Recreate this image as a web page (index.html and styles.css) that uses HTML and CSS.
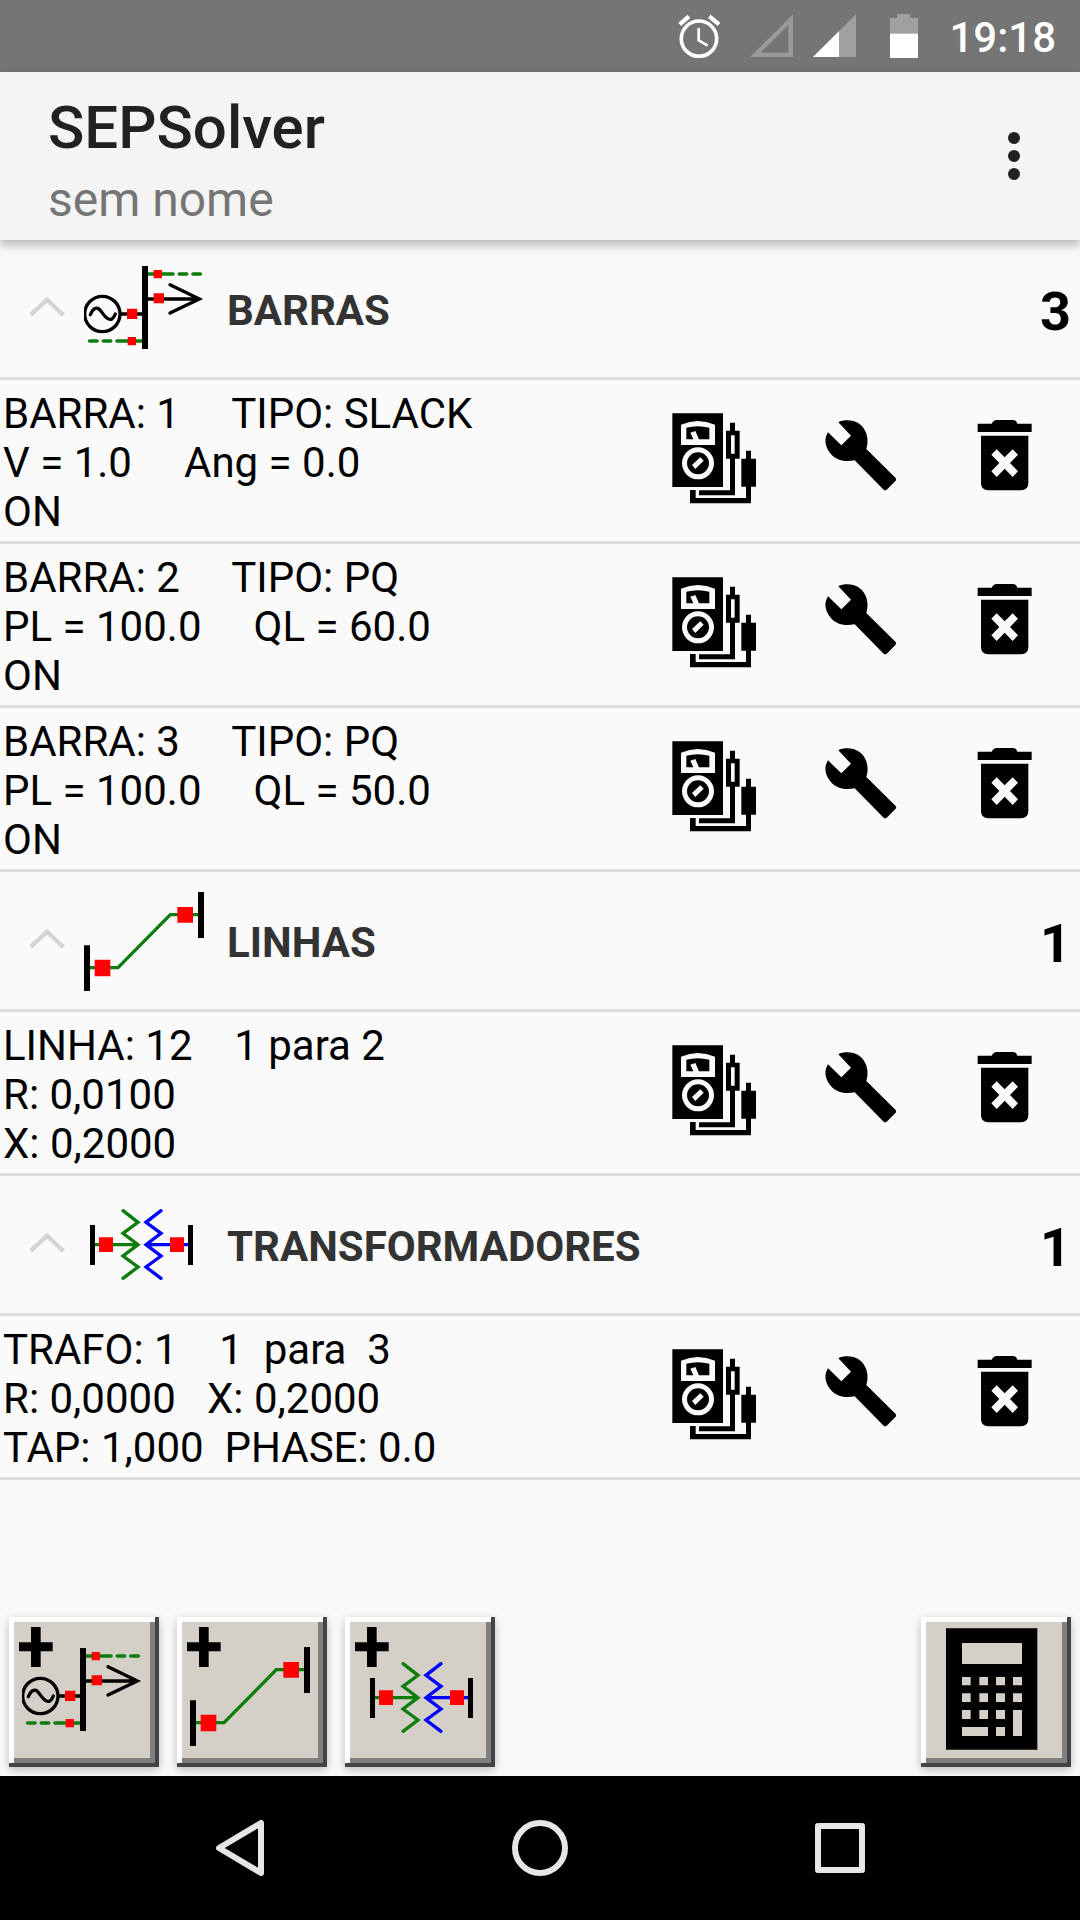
FILE: index.html
```html
<!DOCTYPE html>
<html lang="pt-BR">
<head>
<meta charset="utf-8">
<meta name="viewport" content="width=device-width, initial-scale=1">
<title>SEPSolver</title>
<link rel="stylesheet" href="styles.css">
</head>
<body>
<svg class="sprite" aria-hidden="true">
  <symbol id="chevron" viewBox="87 703 108 72">
    <path d="M92 763L141 717L190 763" fill="none" stroke="#d4d4d4" stroke-width="13"/>
  </symbol>
  <symbol id="bus" viewBox="252 597 360 300">
    <g fill="none" stroke="#000" stroke-width="10" stroke-linecap="round">
      <circle cx="307" cy="762" r="53"/>
      <path d="M271 764C280 742 293 738 304 755C318 775 334 792 346 762M362 762H430M440 717H598M510 674L598 717L510 759"/>
    </g>
    <path d="M445 642H519M538 642H560M579 642H601M269 843H291M310 843H332M351 843H428" fill="none" stroke="#0c7c0c" stroke-width="11" stroke-linecap="round"/>
    <path d="M426 618h18v249h-18z"/>
    <path d="M461 630h25v25h-25zM461 700h31v30h-31zM381 746h31v31h-31zM383 831h25v25h-25z" fill="#f00"/>
  </symbol>
  <symbol id="line" viewBox="252 92 360 300">
    <path d="M268 322H354L511 163H596" fill="none" stroke="#0c7c0c" stroke-width="10"/>
    <path d="M252 255h18v138h-18zM594 95h18v138h-18z"/>
    <path d="M284 298h47v50h-47zM532 140h47v47h-47z" fill="#f00"/>
  </symbol>
  <symbol id="transformer" viewBox="102 144 360 300">
    <path d="M132 293H264M219 191L264 226L219 259L264 293L219 327L264 360L219 394" fill="none" stroke="#0c7c0c" stroke-width="10" stroke-linecap="round"/>
    <path d="M416 293H288M333 191L288 226L333 259L288 293L333 327L288 360L333 394" fill="none" stroke="#00f" stroke-width="10" stroke-linecap="round"/>
    <path d="M120 234h15v120h-15zM414 234h15v120h-15z"/>
    <path d="M147 271h42v44h-42zM360 271h42v44h-42z" fill="#f00"/>
  </symbol>
  <symbol id="plus" viewBox="57 81 102 120">
    <path d="M93 81h29v46h36v27h-36v47h-29v-47h-36v-27h36z"/>
  </symbol>
  <symbol id="meter" viewBox="81 98 288 288">
    <path fill-rule="evenodd" d="M97 99H249V320H97zM123 133Q174 111 225 133V194H123zM126 249a48 48 0 1 0 96 0a48 48 0 1 0-96 0z"/>
    <path d="M139 142Q174 133 208 142V177H177L166 152L151 157L160 177H139z"/>
    <path fill-rule="evenodd" d="M141 249a33 33 0 1 0 66 0a33 33 0 1 0-66 0zM156 254L181 231L191 241L166 266z"/>
    <path fill-rule="evenodd" d="M270 127h15v24h14v84h-14v110H177v-15h93v-95h-12v-84h12zM273 165v55h11v-55zM318 211h15v24h15v84h-15v50H150v-40h17v24H318v-34h-14v-84h14z"/>
  </symbol>
  <symbol id="wrench" viewBox="517 98 288 288">
    <path d="M596 126C608 119 628 119 641 122C675 131 692 169 680 206L768 293Q771 297 768 301L741 328Q737 331 732 328L645 240C616 246 587 241 569 215C554 194 554 173 565 156L605 195L634 166z"/>
  </symbol>
  <symbol id="trash" viewBox="952 98 288 288">
    <path d="M1014 130H1056Q1062 119 1070 119H1120Q1130 119 1133 130H1176V155H1014z"/>
    <path fill-rule="evenodd" d="M1024 166H1166V308Q1166 330 1144 330H1046Q1024 330 1024 308zM1071 207L1055 223L1079 248L1055 273L1071 290L1095 265L1119 290L1135 273L1111 248L1135 223L1119 207L1095 231z"/>
  </symbol>
</svg>

<header class="status-bar">
  <svg class="status-alarm" viewBox="115 42 129 132" role="img" aria-label="Alarme">
    <g fill="none" stroke="#fff">
      <circle cx="178" cy="116" r="53" stroke-width="11"/>
      <path d="M177 84V121L204 137" stroke-width="8"/>
      <path d="M120 73L148 49M209 49L238 73" stroke-width="13"/>
    </g>
  </svg>
  <svg class="status-sim" viewBox="331 42 129 132" role="img" aria-label="Sem sinal">
    <path fill="#999" fill-rule="evenodd" d="M331 171L460 43V171zM363 158H446V75z"/>
  </svg>
  <svg class="status-signal" viewBox="519 42 129 132" role="img" aria-label="Sinal">
    <path fill="#a0a0a0" d="M519 171L648 43V171z"/>
    <path fill="#fff" d="M519 171L597 94V171z"/>
  </svg>
  <svg class="status-battery" viewBox="750 42 84 132" role="img" aria-label="Bateria">
    <path fill="#a0a0a0" d="M772 42h39v12h23v50h-84V54h22z"/>
    <path fill="#fff" d="M750 101h84v73h-84z"/>
  </svg>
  <time class="clock">19:18</time>
</header>

<div class="app-bar">
  <div class="app-names">
    <h1 class="app-title">SEPSolver</h1>
    <p class="app-subtitle">sem nome</p>
  </div>
  <button class="menu-button" type="button" aria-label="Mais opções">
    <span class="dot"></span><span class="dot"></span><span class="dot"></span>
  </button>
</div>

<main class="content">
  <section>
    <button class="group" type="button" aria-expanded="true">
      <svg class="chevron"><use href="#chevron"/></svg>
      <svg class="group-icon"><use href="#bus"/></svg>
      <span class="group-title">BARRAS</span>
      <span class="group-count">3</span>
    </button>
    <ul class="items">
      <li class="item">
        <p class="details">BARRA: 1     TIPO: SLACK
V = 1.0     Ang = 0.0
ON</p>
        <button class="action" type="button" aria-label="Medir"><svg class="action-icon"><use href="#meter"/></svg></button>
        <button class="action" type="button" aria-label="Editar"><svg class="action-icon"><use href="#wrench"/></svg></button>
        <button class="action" type="button" aria-label="Excluir"><svg class="action-icon"><use href="#trash"/></svg></button>
      </li>
      <li class="item">
        <p class="details">BARRA: 2     TIPO: PQ
PL = 100.0     QL = 60.0
ON</p>
        <button class="action" type="button" aria-label="Medir"><svg class="action-icon"><use href="#meter"/></svg></button>
        <button class="action" type="button" aria-label="Editar"><svg class="action-icon"><use href="#wrench"/></svg></button>
        <button class="action" type="button" aria-label="Excluir"><svg class="action-icon"><use href="#trash"/></svg></button>
      </li>
      <li class="item">
        <p class="details">BARRA: 3     TIPO: PQ
PL = 100.0     QL = 50.0
ON</p>
        <button class="action" type="button" aria-label="Medir"><svg class="action-icon"><use href="#meter"/></svg></button>
        <button class="action" type="button" aria-label="Editar"><svg class="action-icon"><use href="#wrench"/></svg></button>
        <button class="action" type="button" aria-label="Excluir"><svg class="action-icon"><use href="#trash"/></svg></button>
      </li>
    </ul>
  </section>

  <section>
    <button class="group" type="button" aria-expanded="true">
      <svg class="chevron"><use href="#chevron"/></svg>
      <svg class="group-icon"><use href="#line"/></svg>
      <span class="group-title">LINHAS</span>
      <span class="group-count">1</span>
    </button>
    <ul class="items">
      <li class="item">
        <p class="details">LINHA: 12    1 para 2
R: 0,0100
X: 0,2000</p>
        <button class="action" type="button" aria-label="Medir"><svg class="action-icon"><use href="#meter"/></svg></button>
        <button class="action" type="button" aria-label="Editar"><svg class="action-icon"><use href="#wrench"/></svg></button>
        <button class="action" type="button" aria-label="Excluir"><svg class="action-icon"><use href="#trash"/></svg></button>
      </li>
    </ul>
  </section>

  <section>
    <button class="group" type="button" aria-expanded="true">
      <svg class="chevron"><use href="#chevron"/></svg>
      <svg class="group-icon"><use href="#transformer"/></svg>
      <span class="group-title">TRANSFORMADORES</span>
      <span class="group-count">1</span>
    </button>
    <ul class="items">
      <li class="item">
        <p class="details">TRAFO: 1    1  para  3
R: 0,0000   X: 0,2000
TAP: 1,000  PHASE: 0.0</p>
        <button class="action" type="button" aria-label="Medir"><svg class="action-icon"><use href="#meter"/></svg></button>
        <button class="action" type="button" aria-label="Editar"><svg class="action-icon"><use href="#wrench"/></svg></button>
        <button class="action" type="button" aria-label="Excluir"><svg class="action-icon"><use href="#trash"/></svg></button>
      </li>
    </ul>
  </section>
</main>

<div class="toolbar">
  <button class="tool" type="button" aria-label="Adicionar barra">
    <svg class="tool-icon" viewBox="0 0 150 150">
      <use href="#plus" x="10" y="10" width="34" height="40"/>
      <use href="#bus" x="13" y="24" width="120" height="100"/>
    </svg>
  </button>
  <button class="tool" type="button" aria-label="Adicionar linha">
    <svg class="tool-icon" viewBox="0 0 150 150">
      <use href="#plus" x="10" y="10" width="34" height="40"/>
      <use href="#line" x="13" y="29" width="120" height="100"/>
    </svg>
  </button>
  <button class="tool" type="button" aria-label="Adicionar transformador">
    <svg class="tool-icon" viewBox="0 0 150 150">
      <use href="#plus" x="10" y="10" width="34" height="40"/>
      <use href="#transformer" x="19" y="31" width="120" height="100"/>
    </svg>
  </button>
  <button class="tool tool-end" type="button" aria-label="Calcular">
    <svg class="tool-icon" viewBox="63 51 450 450">
      <path fill-rule="evenodd" d="M138 85h274v364H138zM186 129v63h180v-63zM186 231v25h26v-25zM238 231v25h26v-25zM288 231v25h27v-25zM339 231v25h27v-25zM186 280v26h26v-26zM238 280v26h26v-26zM288 280v26h27v-26zM339 280v26h27v-26zM186 330v27h26v-27zM238 330v27h26v-27zM288 330v27h27v-27zM339 330v78h27v-78zM186 381v27h78v-27zM288 381v27h27v-27z"/>
    </svg>
  </button>
</div>

<nav class="nav-bar">
  <button class="nav-button" type="button" aria-label="Voltar">
    <svg class="nav-icon" viewBox="0 0 60 60"><path d="M51 5V55L9 30z"/></svg>
  </button>
  <button class="nav-button" type="button" aria-label="Início">
    <svg class="nav-icon" viewBox="0 0 60 60"><circle cx="30" cy="30" r="25"/></svg>
  </button>
  <button class="nav-button" type="button" aria-label="Recentes">
    <svg class="nav-icon" viewBox="0 0 60 60"><path d="M8 8H52V52H8z"/></svg>
  </button>
</nav>
</body>
</html>
```

FILE: styles.css
```css
* {
  box-sizing: border-box;
}

body {
  display: flex;
  flex-direction: column;
  min-height: 100vh;
  margin: 0;
  background: #fafafa;
  color: #000;
  font-family: Roboto, sans-serif;
  font-size: 42px;
  line-height: 49px;
}

button {
  margin: 0;
  padding: 0;
  border: 0;
  background: none;
  color: inherit;
  font: inherit;
}

h1,
p,
ul {
  margin: 0;
  padding: 0;
}

svg {
  display: block;
  flex: none;
}

.sprite {
  position: absolute;
  width: 0;
  height: 0;
}

/* System status bar */
.status-bar {
  display: flex;
  align-items: center;
  justify-content: flex-end;
  height: 72px;
  padding-right: 24px;
  background: #757575;
  color: #fff;
}

.status-alarm,
.status-sim,
.status-signal {
  width: 43px;
  height: 44px;
}

.status-alarm {
  margin-right: 29px;
}

.status-sim {
  margin-right: 20px;
}

.status-signal {
  margin-right: 34px;
}

.status-battery {
  width: 28px;
  height: 44px;
  margin-right: 31px;
}

.clock {
  padding-top: 2px;
  font-weight: 500;
}

/* Application bar */
.app-bar {
  display: flex;
  align-items: center;
  justify-content: space-between;
  min-height: 168px;
  padding: 0 48px;
  background: #f4f4f4;
  box-shadow: 0 5px 10px rgba(0, 0, 0, 0.28);
  z-index: 1;
}

.app-names {
  padding-top: 8px;
}

.app-title {
  color: #212121;
  font-size: 60px;
  font-weight: 500;
  line-height: 80px;
}

.app-subtitle {
  color: #757575;
  font-size: 48px;
  line-height: 64px;
}

.menu-button {
  display: flex;
  flex-direction: column;
  align-items: center;
  gap: 6px;
  width: 36px;
}

.dot {
  width: 12px;
  height: 12px;
  border-radius: 50%;
  background: #212121;
}

/* Grouped list */
.content {
  flex: 1;
}

.group {
  display: flex;
  align-items: center;
  width: 100%;
  height: 140px;
  padding: 0 9px 0 29px;
  border-bottom: 3px solid #dcdcdc;
  text-align: left;
}

.chevron {
  width: 36px;
  height: 24px;
  margin: 0 19px 4px 0;
}

.group-icon {
  width: 120px;
  height: 100px;
}

.group-title {
  flex: 1;
  padding: 3px 0 0 23px;
  color: #333;
  font-weight: 700;
}

.group-count {
  padding-top: 6px;
  font-size: 54px;
  font-weight: 700;
  line-height: 63px;
}

.items {
  list-style: none;
}

.item {
  display: flex;
  min-height: 164px;
  padding-right: 3px;
  border-bottom: 3px solid #dcdcdc;
}

.details {
  flex: 1;
  padding: 9px 0 0 3px;
  white-space: pre-wrap;
}

.action {
  display: flex;
  align-items: center;
  justify-content: center;
  width: 145px;
}

.action-icon {
  width: 96px;
  height: 96px;
}

/* Raised tool buttons */
.toolbar {
  display: flex;
  gap: 18px;
  padding: 9px;
}

.tool {
  width: 150px;
  height: 150px;
  background: #d4d0c8;
  box-shadow:
    inset -4px -4px #444,
    inset 5px 5px #fff,
    inset -9px -9px #808080,
    0 3px 9px rgba(0, 0, 0, 0.25);
}

.tool-end {
  margin-left: auto;
}

.tool-icon {
  width: 150px;
  height: 150px;
}

/* System navigation bar */
.nav-bar {
  display: flex;
  height: 144px;
  padding: 0 90px;
  background: #000;
  z-index: 1;
}

.nav-button {
  display: flex;
  flex: 1;
  align-items: center;
  justify-content: center;
}

.nav-icon {
  width: 60px;
  height: 60px;
  fill: none;
  stroke: #e6e6e6;
  stroke-width: 6;
  stroke-linejoin: round;
}
```
